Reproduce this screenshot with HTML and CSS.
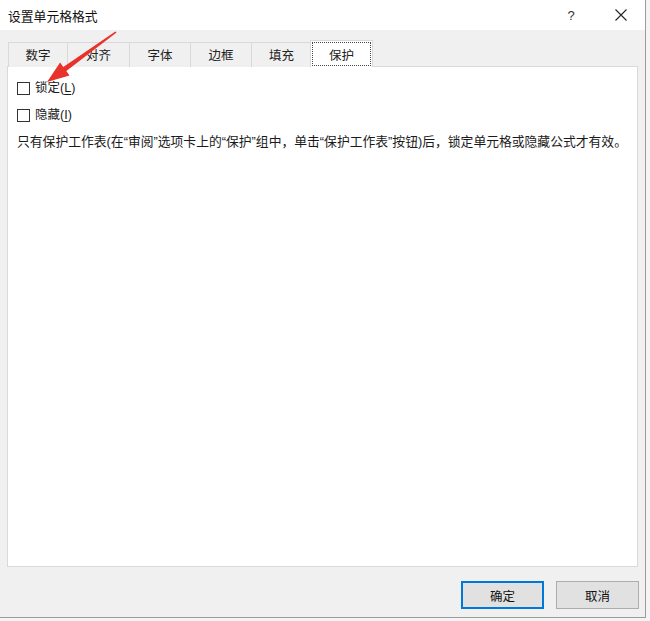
FILE: index.html
```html
<!DOCTYPE html>
<html lang="zh-CN">
<head>
<meta charset="utf-8">
<title>设置单元格格式</title>
<link rel="stylesheet" href="styles.css">
</head>
<body>
<div class="dialog">
  <div class="titlebar">
    <span class="title">设置单元格格式</span>
    <span class="help">?</span>
    <span class="close">
      <svg width="12" height="12" viewBox="0 0 12 12"><path d="M0.5 0.5 L11.5 11.5 M11.5 0.5 L0.5 11.5" stroke="#222" stroke-width="1.1" fill="none"/></svg>
    </span>
  </div>
  <div class="content">
    <div class="tabs">
      <div class="tab w59">数字</div>
      <div class="tab w62">对齐</div>
      <div class="tab w61">字体</div>
      <div class="tab w61">边框</div>
      <div class="tab w60">填充</div>
      <div class="tab selected"><span class="focus">保护</span></div>
    </div>
    <div class="panel">
      <label class="check"><span class="box"></span><span>锁定(<u>L</u>)</span></label>
      <label class="check"><span class="box"></span><span>隐藏(<u>I</u>)</span></label>
      <p class="desc">只有保护工作表(在“审阅”选项卡上的“保护”组中，单击“保护工作表”按钮)后，锁定单元格或隐藏公式才有效。</p>
    </div>
    <div class="buttons">
      <button class="btn default">确定</button>
      <button class="btn">取消</button>
    </div>
  </div>
  <svg class="arrow" width="130" height="95" viewBox="0 0 130 95">
    <polygon points="47,82 69.5,75.6 66.3,71.1 116.6,32.6 115.4,31.4 63.3,67.1 60.1,62.6" fill="#e8322b"/>
  </svg>
</div>
</body>
</html>
```

FILE: styles.css
```css
* { box-sizing: border-box; }
html, body {
  margin: 0;
  padding: 0;
  background: #f4f4f4;
}
body {
  font-family: "Liberation Sans", "Noto Sans CJK SC", sans-serif;
  font-size: 12.5px;
  color: #1a1a1a;
  width: 650px;
  height: 621px;
  overflow: hidden;
}
.dialog {
  position: relative;
  width: 646px;
  height: 618px;
  background: #f0f0f0;
  border-right: 1px solid #9c9c9c;
  border-bottom: 1px solid #9c9c9c;
  display: flex;
  flex-direction: column;
}
.titlebar {
  height: 30px;
  background: #fff;
  display: flex;
  align-items: center;
  padding-left: 8px;
  flex: none;
}
.title {
  flex: 1;
  font-size: 12.8px;
  color: #111;
}
.help {
  width: 14px;
  text-align: center;
  font-size: 13px;
  color: #333;
  margin-right: 37px;
}
.close {
  width: 12px;
  height: 12px;
  display: flex;
  margin-right: 18px;
}
.content {
  flex: 1;
  display: flex;
  flex-direction: column;
  padding: 10px 6px 0 7px;
}
.tabs {
  display: flex;
  align-items: flex-end;
  height: 27px;
  padding-left: 1px;
  position: relative;
  z-index: 2;
  margin-bottom: -1px;
}
.tab {
  height: 25px;
  border: 1px solid #d9d9d9;
  border-bottom: none;
  border-right: none;
  background: #f0f0f0;
  display: flex;
  align-items: center;
  justify-content: center;
  color: #222;
  padding-bottom: 1px;
}
.w59 { width: 59px; }
.w62 { width: 62px; }
.w61 { width: 61px; }
.w60 { width: 60px; }
.tab.selected {
  width: 63px;
  height: 27px;
  margin-left: -1px;
  background: #fff;
  border-right: 1px solid #d9d9d9;
  padding: 1px 1px 1px 1px;
}
.focus {
  flex: 1;
  align-self: stretch;
  display: flex;
  align-items: center;
  justify-content: center;
  border: 1px dotted #444;
  padding-top: 1px;
}
.panel {
  height: 501px;
  background: #fff;
  border: 1px solid #d9d9d9;
  margin-right: 1px;
  padding: 15px 0 0 9px;
  display: flex;
  flex-direction: column;
  position: relative;
  z-index: 1;
}
.check {
  display: flex;
  align-items: center;
  gap: 5px;
  height: 13px;
  margin-bottom: 14px;
  line-height: 13px;
}
.box {
  width: 13px;
  height: 13px;
  border: 1px solid #333;
  background: #fff;
  flex: none;
}
.check u { text-decoration-thickness: 1px; text-underline-offset: 2px; }
.desc {
  margin: -4px 0 0 0;
  line-height: 20px;
  font-size: 12.8px;
  white-space: nowrap;
}
.buttons {
  display: flex;
  justify-content: flex-end;
  gap: 12px;
  margin-top: 14px;
}
.btn {
  width: 83px;
  height: 28px;
  font-family: "Liberation Sans", "Noto Sans CJK SC", sans-serif;
  font-size: 12.5px;
  color: #111;
  background: #e1e1e1;
  border: 1px solid #adadad;
  padding: 0;
}
.btn.default {
  border: 2px solid #0078d7;
}
.arrow {
  position: absolute;
  left: 0;
  top: 0;
  z-index: 5;
  pointer-events: none;
}
```
